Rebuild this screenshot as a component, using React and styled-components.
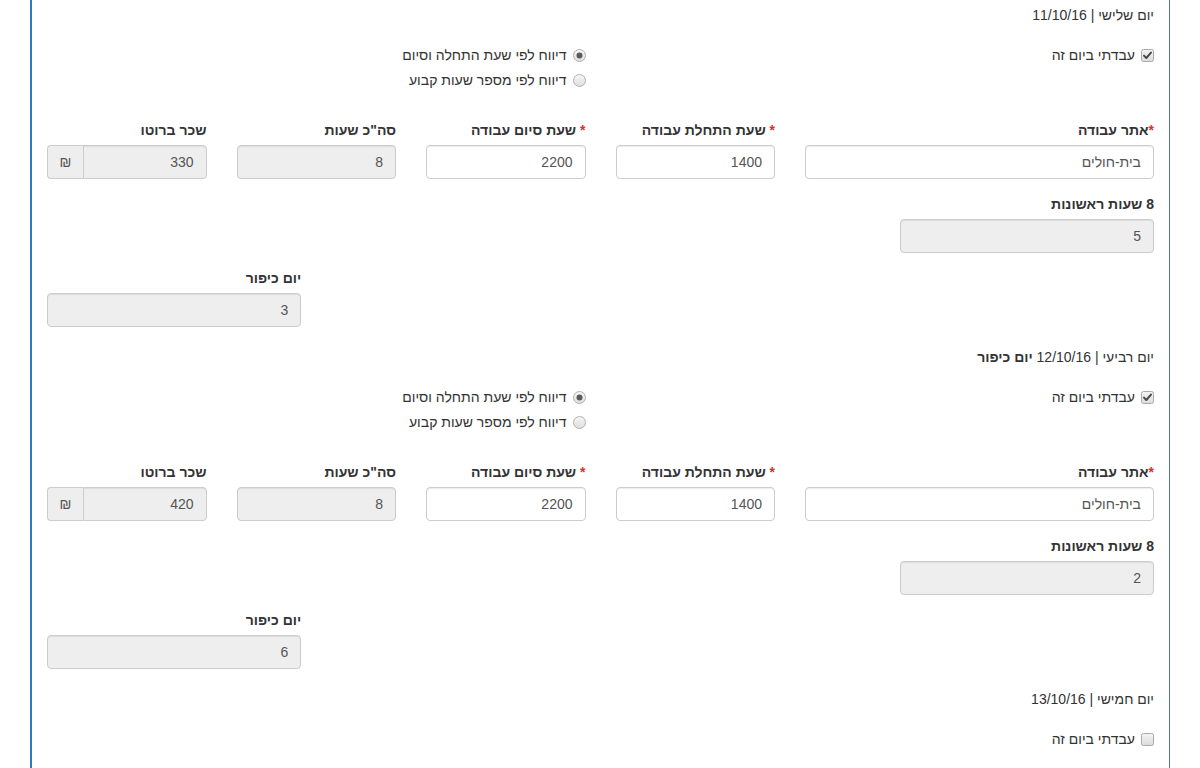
import React from 'react'
import styled, { createGlobalStyle } from 'styled-components'

const GlobalStyle = createGlobalStyle`
  html, body {
    margin: 0;
    padding: 0;
    background: #fff;
  }
  body {
    font-family: "Liberation Sans", Arial, "DejaVu Sans", sans-serif;
    font-size: 14px;
    line-height: 20px;
    color: #333;
  }
  * { box-sizing: border-box; }
`

const days = [
  {
    name: 'יום שלישי',
    date: '11/10/16',
    worked: true,
    site: 'בית-חולים',
    start: '1400',
    end: '2200',
    total: '8',
    gross: '330',
    first8: '5',
    kippur: '3',
  },
  {
    name: 'יום רביעי',
    date: '12/10/16',
    holiday: 'יום כיפור',
    worked: true,
    site: 'בית-חולים',
    start: '1400',
    end: '2200',
    total: '8',
    gross: '420',
    first8: '2',
    kippur: '6',
  },
  {
    name: 'יום חמישי',
    date: '13/10/16',
    worked: false,
  },
]

function CheckBox({ checked }) {
  return (
    <BoxIcon width="13" height="13" viewBox="0 0 13 13">
      <defs>
        <linearGradient id="cbg" x1="0" y1="0" x2="0" y2="1">
          <stop offset="0" stopColor="#f4f4f4" />
          <stop offset="1" stopColor="#dcdcdc" />
        </linearGradient>
      </defs>
      <rect x="0.5" y="0.5" width="12" height="12" rx="2" fill="url(#cbg)" stroke="#a9a9a9" />
      {checked && (
        <path d="M3 6.6 L5.3 9 L10 3.6" fill="none" stroke="#4a4a4a" strokeWidth="2" strokeLinecap="round" strokeLinejoin="round" />
      )}
    </BoxIcon>
  )
}

function Radio({ checked }) {
  return (
    <BoxIcon width="13" height="13" viewBox="0 0 13 13">
      <defs>
        <linearGradient id="rbg" x1="0" y1="0" x2="0" y2="1">
          <stop offset="0" stopColor="#f6f6f6" />
          <stop offset="1" stopColor="#dedede" />
        </linearGradient>
      </defs>
      <circle cx="6.5" cy="6.5" r="6" fill="url(#rbg)" stroke="#b0b0b0" />
      {checked && <circle cx="6.5" cy="6.5" r="3" fill="#5a5a5a" />}
    </BoxIcon>
  )
}

function Field({ label, required, tight, value, readOnly, addon }) {
  return (
    <>
      <Label>
        {required && <Star>{tight ? '*' : '* '}</Star>}
        {label}
      </Label>
      {addon ? (
        <InputGroup>
          <Input readOnly value={value} joined />
          <Addon>{addon}</Addon>
        </InputGroup>
      ) : (
        <Input readOnly={readOnly} grey={readOnly} value={value} onChange={() => {}} />
      )}
    </>
  )
}

function Day({ day }) {
  return (
    <Section>
      <DayTitle>
        {day.name} | {day.date}
        {day.holiday && <b> {day.holiday}</b>}
      </DayTitle>
      <Row>
        <Col span={6}>
          <Option>
            <CheckBox checked={day.worked} />
            עבדתי ביום זה
          </Option>
        </Col>
        {day.worked && (
          <Col span={6}>
            <Option>
              <Radio checked />
              דיווח לפי שעת התחלה וסיום
            </Option>
            <Option second>
              <Radio />
              דיווח לפי מספר שעות קבוע
            </Option>
          </Col>
        )}
      </Row>
      {day.worked && (
        <Fields>
          <Row>
            <Col span={4}>
              <FormGroup>
                <Field label="אתר עבודה" required tight value={day.site} />
              </FormGroup>
            </Col>
            <Col span={2}>
              <FormGroup>
                <Field label="שעת התחלת עבודה" required value={day.start} />
              </FormGroup>
            </Col>
            <Col span={2}>
              <FormGroup>
                <Field label="שעת סיום עבודה" required value={day.end} />
              </FormGroup>
            </Col>
            <Col span={2}>
              <FormGroup>
                <Field label={'סה"כ שעות'} readOnly value={day.total} />
              </FormGroup>
            </Col>
            <Col span={2}>
              <FormGroup>
                <Field label="שכר ברוטו" value={day.gross} addon="₪" />
              </FormGroup>
            </Col>
          </Row>
          <Row>
            <Col span={3}>
              <FormGroup>
                <Field label="8 שעות ראשונות" readOnly value={day.first8} />
              </FormGroup>
            </Col>
          </Row>
          <Row>
            <Col span={3} offset={9}>
              <FormGroup last>
                <Field label="יום כיפור" readOnly value={day.kippur} />
              </FormGroup>
            </Col>
          </Row>
        </Fields>
      )}
    </Section>
  )
}

export default function App() {
  return (
    <>
      <GlobalStyle />
      <Panel dir="rtl">
        {days.map((day) => (
          <Day key={day.date} day={day} />
        ))}
      </Panel>
    </>
  )
}

const Panel = styled.div`
  margin-left: 30px;
  width: 1140px;
  min-height: 100vh;
  border-left: 2px solid #2f7bc0;
  border-right: 1px solid #4f78a3;
  padding-top: 5px;
`

const Section = styled.div`
  padding-bottom: 20px;
`

const DayTitle = styled.div`
  padding: 0 15px;
  height: 20px;
  margin-bottom: 20px;
  b {
    font-weight: bold;
  }
`

const Row = styled.div`
  display: flex;
  flex-wrap: wrap;
`

const Col = styled.div`
  width: ${(p) => (p.span / 12) * 100}%;
  margin-right: ${(p) => ((p.offset || 0) / 12) * 100}%;
  padding: 0 15px;
`

const Option = styled.div`
  display: flex;
  align-items: center;
  gap: 6px;
  height: 20px;
  margin-top: ${(p) => (p.second ? '5px' : '0')};
`

const BoxIcon = styled.svg`
  flex: none;
  display: block;
`

const Fields = styled.div`
  margin-top: 30px;
`

const FormGroup = styled.div`
  margin-bottom: ${(p) => (p.last ? '0' : '15px')};
`

const Label = styled.div`
  font-weight: bold;
  margin-bottom: 5px;
  height: 20px;
  white-space: nowrap;
`

const Star = styled.span`
  color: #d9302c;
`

const Input = styled.input`
  display: block;
  width: 100%;
  height: 34px;
  padding: 6px 12px;
  font-family: inherit;
  font-size: 14px;
  line-height: 20px;
  color: #555;
  text-align: right;
  direction: rtl;
  background: ${(p) => (p.grey || p.joined ? '#eee' : '#fff')};
  border: 1px solid #ccc;
  border-radius: ${(p) => (p.joined ? '0 4px 4px 0' : '4px')};
  box-shadow: inset 0 1px 1px rgba(0, 0, 0, 0.075);
  outline: none;
`

const InputGroup = styled.div`
  display: flex;
`

const Addon = styled.span`
  flex: none;
  width: 36px;
  height: 34px;
  display: flex;
  align-items: center;
  justify-content: center;
  font-size: 14px;
  color: #555;
  background: #eee;
  border: 1px solid #ccc;
  border-right: 0;
  border-radius: 4px 0 0 4px;
`
